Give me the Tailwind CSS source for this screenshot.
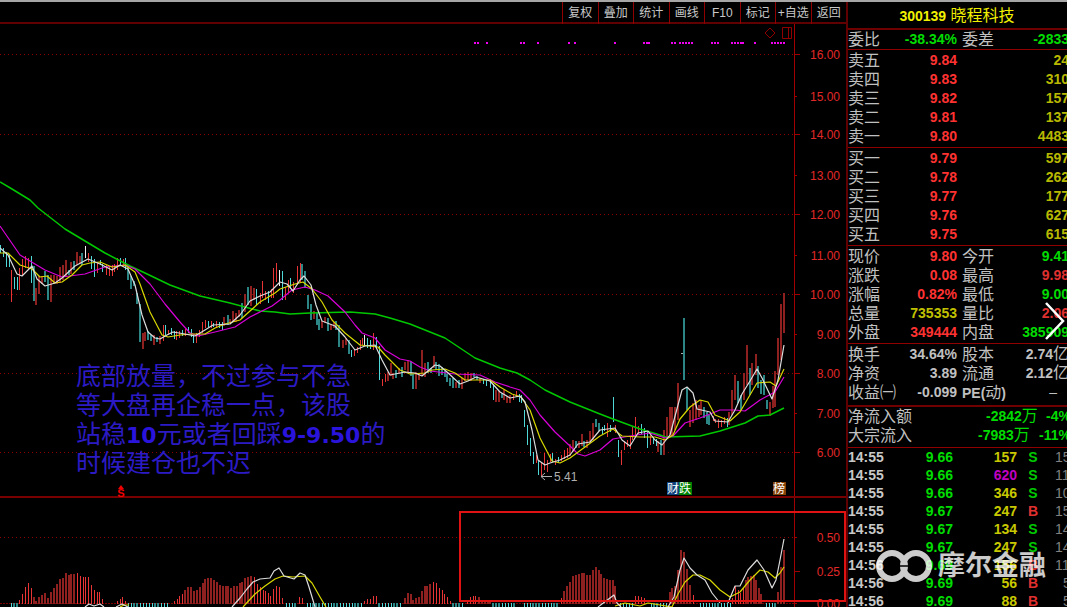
<!DOCTYPE html>
<html lang="zh-CN">
<head>
<meta charset="utf-8">
<title>300139 晓程科技</title>
<script src="https://cdn.jsdelivr.net/npm/@tailwindcss/browser@4"></script>
</head>
<body class="flex h-screen flex-col overflow-hidden bg-black font-['Liberation_Sans','Noto_Sans_CJK_SC',sans-serif] text-[#c0c0c0]">
<div class="h-[2px] shrink-0 bg-[#a6a6a6]"></div>
<div class="flex min-h-0 flex-1">
  <main class="relative flex min-w-0 flex-1 flex-col">
    <nav class="flex h-[22px] shrink-0 justify-end border-b-2 border-[#600000] text-[12px] text-[#c8c8c8]">
      <div class="grid w-[284px] grid-cols-8 leading-[22px]">
        <button class="border-l border-[#900000]">复权</button>
        <button class="border-l border-[#900000]">叠加</button>
        <button class="border-l border-[#900000]">统计</button>
        <button class="border-l border-[#900000]">画线</button>
        <button class="border-l border-[#900000]">F10</button>
        <button class="border-l border-[#900000]">标记</button>
        <button class="border-l border-[#900000] whitespace-nowrap">+自选</button>
        <button class="border-l border-[#900000]">返回</button>
      </div>
    </nav>
    <svg class="h-auto w-full" viewBox="0 24 846 583" role="img" aria-label="K线图">
      <g id="grid" stroke="#8c0000" stroke-dasharray="1 3" shape-rendering="crispEdges"></g>
      <g stroke="#a00000" shape-rendering="crispEdges">
        <path d="M794.5 24V607"/>
        <path id="ticks"/>
        <path d="M0 497H846" stroke="#780000" stroke-width="2"/>
        <path d="M0 603.5H794" stroke="#780000" stroke-dasharray="2 1"/>
      </g>
      <g id="labels" fill="#e02828" font-size="12" text-anchor="end"></g>
      <path id="marks" stroke="#f000f0" stroke-width="2" shape-rendering="crispEdges"/>
      <g fill="none" stroke="#900000"><path d="M770 28l5 5-5 5-5-5zM782.5 27.500h9v11h-9zM788.500 27.500v11"/></g>
      <g id="candles" shape-rendering="crispEdges"></g>
      <g id="hist" shape-rendering="crispEdges"></g>
      <g fill="none" stroke-linejoin="round" stroke-width="1.200">
        <polyline stroke="#00c800" stroke-width="1.500" points="0,182 12,189 30,200 38,208 65,229 90,244 105,253 130,266 145,273 170,285 200,296 230,303 260,311 275,312 290,314 310,313 350,312 375,314 390,318 410,324 430,332 445,338 475,358 500,368 517,373 530,380 545,390 570,402 600,414 613,419 640,429 660,435 665,437 700,436 720,431 745,423 758,416 770,415 784,408"/>
        <polyline stroke="#d800d8" points="0,226 20,255 30,261 45,270 62,277 85,274 105,267 125,265 135,269 150,284 165,304 180,322 190,333 198,336 215,332 235,327 250,317 262,311 272,306 280,300 292,290 305,287 315,290 328,296 345,312 355,325 362,333 375,338 385,350 400,359 410,361 420,367 430,371 455,374 480,375 495,382 510,387 520,390 530,400 540,415 555,432 570,446 578,454 585,456 600,450 613,439 630,436 650,433 665,438 673,436 685,423 700,418 720,410 735,410 745,411 760,400 775,392 784,377"/>
        <polyline stroke="#d8d800" points="0,253 8,253 20,265 32,269 40,277 47,276 55,283 62,282 72,275 82,265 90,263 100,262 112,267 125,265 135,272 140,284 150,312 162,335 168,337 180,335 192,334 205,334 215,328 225,324 240,320 250,311 260,302 275,293 280,289 295,284 303,282 312,289 322,302 332,320 345,333 360,345 378,347 385,355 400,370 410,374 425,373 432,370 445,369 455,373 465,380 490,380 500,387 512,394 521,397 530,410 540,438 552,461 560,463 570,458 585,447 600,436 613,429 622,436 640,437 655,437 665,440 673,435 680,419 690,407 700,400 708,402 715,415 730,421 740,412 757,383 770,382 776,386 784,369"/>
        <polyline stroke="#dcdcdc" points="0,248 8,255 17,274 22,276 32,266 37,279 45,286 55,283 62,278 75,266 88,259 100,264 112,270 120,265 128,269 135,285 142,315 148,332 155,338 160,339 167,335 173,332 185,334 195,336 205,330 213,325 230,324 240,315 250,301 260,296 270,292 275,287 280,282 287,284 293,291 300,280 304,276 311,285 316,305 322,321 335,326 345,337 355,350 365,346 375,345 382,360 390,375 405,372 415,373 422,376 435,365 440,366 447,372 460,384 468,381 476,377 490,381 500,392 510,398 520,396 525,402 532,430 538,460 545,465 550,463 560,460 570,455 578,444 590,442 600,430 615,428 622,440 630,446 638,433 648,431 655,440 662,445 670,435 678,405 682,390 687,387 693,393 697,409 710,412 715,421 728,422 735,410 742,394 750,381 757,369 762,378 772,399 778,380 784,345"/>
        <path stroke="#d8d800" d="M120 607L124 605H129M243 607L255 594 265 586 275 579 283 576 293 577 305 576 312 583 320 597 326 607M615 606L625 603 640 606 648 603 660 605 672 607 678 594 685 582 693 575 700 575 710 580 720 590 730 597 740 592 750 580 760 570 768 572 775 578 780 573 784 567"/>
        <path stroke="#dcdcdc" d="M85 607L89 604 94 606 100 604 104 607M116 607L122 604 128 607M232 607L240 598 247 589 253 582 260 579 270 578 274 571 279 568 284 576 294 579 300 573 305 575 309 587 315 607M598 607L610 598 614 595 617 603 621 607M668 607L674 597 680 570 684 558 690 568 697 575 705 580 712 593 720 603M728 603L735 586 740 586 748 570 757 560 764 570 772 588 776 580 780 560 784 539"/>
      </g>
      <path d="M681 353.500h2" stroke="#aaa"/>
      <path d="M552 476.500H541M545 473l-4 3.500 4 3.500" fill="none" stroke="#b0b0b0"/>
      <text x="554" y="481" font-size="12" fill="#b0b0b0">5.41</text>
      <path d="M118 489l3-4 3 4z" fill="#f00000"/>
      <text x="121" y="497" font-size="11" font-weight="bold" fill="#f00000" text-anchor="middle">S</text>
      <g font-size="12" fill="#fff" text-anchor="middle">
        <rect x="667" y="482" width="12" height="13" fill="#10407c"/><text x="673" y="493">财</text>
        <rect x="679" y="482" width="13" height="13" fill="#008000"/><text x="685" y="493">跌</text>
        <rect x="773" y="482" width="13" height="13" fill="#854208"/><text x="779" y="493">榜</text>
      </g>
      <rect x="460" y="512" width="385" height="89" fill="none" stroke="#e01212" stroke-width="2"/>
    </svg>
    <p class="absolute top-[358px] left-[76px] font-['Noto_Sans_CJK_SC',sans-serif] text-[25px] leading-[29px] whitespace-nowrap text-[#2c1bc4]">底部放量，不过参与不急<br>等大盘再企稳一点，该股<br>站稳<b class="font-['DejaVu_Sans'] text-[22px] leading-none text-[#2a14dc]">10</b>元或者回踩<b class="font-['DejaVu_Sans'] text-[22px] leading-none text-[#2a14dc]">9-9.50</b>的<br>时候建仓也不迟</p>
  </main>

  <aside class="relative w-[221px] shrink-0 overflow-hidden border-l-2 border-[#600000] text-[14px] leading-[19px] font-bold whitespace-nowrap">
    <h1 class="h-[26px] pr-[1px] text-center text-[16px] leading-[27px] font-normal text-[#f0f000]"><b class="text-[14px]">300139</b> 晓程科技</h1>
    <div class="w-[221px] border-t-2 border-[#700000]">
      <table class="w-full table-fixed">
        <colgroup><col class="w-[52px]"><col class="w-[57px]"><col class="w-[48px]"><col></colgroup>
        <tbody class="[&_th]:text-left [&_th]:text-[16px] [&_th]:font-normal [&_td]:text-right">
          <tr><th>委比</th><td class="text-[#00dc00]">-38.34%</td><th class="pl-[5px]">委差</th><td class="text-[#00dc00]">-2833</td></tr>
        </tbody>
      </table>
    </div>
    <div class="w-[221px] border-t border-[#900000] py-[1px]">
      <table class="w-full table-fixed">
        <colgroup><col class="w-[52px]"><col class="w-[57px]"><col></colgroup>
        <tbody class="text-[#b8b800] [&_th]:text-left [&_th]:text-[16px] [&_th]:font-normal [&_th]:text-[#c0c0c0] [&_td]:text-right">
          <tr><th>卖五</th><td class="text-[#ff3232]">9.84</td><td>24</td></tr>
          <tr><th>卖四</th><td class="text-[#ff3232]">9.83</td><td>310</td></tr>
          <tr><th>卖三</th><td class="text-[#ff3232]">9.82</td><td>157</td></tr>
          <tr><th>卖二</th><td class="text-[#ff3232]">9.81</td><td>137</td></tr>
          <tr><th>卖一</th><td class="text-[#ff3232]">9.80</td><td>4483</td></tr>
        </tbody>
      </table>
    </div>
    <div class="w-[221px] border-t border-[#900000] py-[1px]">
      <table class="w-full table-fixed">
        <colgroup><col class="w-[52px]"><col class="w-[57px]"><col></colgroup>
        <tbody class="text-[#b8b800] [&_th]:text-left [&_th]:text-[16px] [&_th]:font-normal [&_th]:text-[#c0c0c0] [&_td]:text-right">
          <tr><th>买一</th><td class="text-[#ff3232]">9.79</td><td>597</td></tr>
          <tr><th>买二</th><td class="text-[#ff3232]">9.78</td><td>262</td></tr>
          <tr><th>买三</th><td class="text-[#ff3232]">9.77</td><td>177</td></tr>
          <tr><th>买四</th><td class="text-[#ff3232]">9.76</td><td>627</td></tr>
          <tr><th>买五</th><td class="text-[#ff3232]">9.75</td><td>615</td></tr>
        </tbody>
      </table>
    </div>
    <div class="w-[221px] border-t border-[#900000] py-[1px]">
      <table class="w-full table-fixed">
        <colgroup><col class="w-[52px]"><col class="w-[57px]"><col class="w-[48px]"><col></colgroup>
        <tbody class="[&_th]:text-left [&_th]:text-[16px] [&_th]:font-normal [&_td]:text-right">
          <tr><th>现价</th><td class="text-[#ff3232]">9.80</td><th class="pl-[5px]">今开</th><td class="text-[#00dc00]">9.41</td></tr>
          <tr><th>涨跌</th><td class="text-[#ff3232]">0.08</td><th class="pl-[5px]">最高</th><td class="text-[#e03030]">9.98</td></tr>
          <tr><th>涨幅</th><td class="text-[#ff3232]">0.82%</td><th class="pl-[5px]">最低</th><td class="text-[#00dc00]">9.00</td></tr>
          <tr><th>总量</th><td class="text-[#c0c000]">735353</td><th class="pl-[5px]">量比</th><td class="text-[#e03030]">2.06</td></tr>
          <tr><th>外盘</th><td class="text-[#ff3232]">349444</td><th class="pl-[5px]">内盘</th><td class="text-[#00dc00]">385909</td></tr>
        </tbody>
      </table>
    </div>
    <div class="w-[221px] border-t border-[#900000] pt-[1px] pb-[3px]">
      <table class="w-full table-fixed">
        <colgroup><col class="w-[52px]"><col class="w-[57px]"><col class="w-[48px]"><col></colgroup>
        <tbody class="[&_th]:text-left [&_th]:text-[16px] [&_th]:font-normal [&_td]:text-right">
          <tr><th>换手</th><td>34.64%</td><th class="pl-[5px]">股本</th><td>2.74<span class="text-[16px] leading-none font-normal">亿</span></td></tr>
          <tr><th>净资</th><td>3.89</td><th class="pl-[5px]">流通</th><td>2.12<span class="text-[16px] leading-none font-normal">亿</span></td></tr>
          <tr><th>收益㈠</th><td>-0.099</td><th class="pl-[5px]"><b class="text-[14px] leading-none">PE(</b>动<b class="text-[14px] leading-none">)</b></th><td class="pr-[12px] font-normal">–</td></tr>
        </tbody>
      </table>
    </div>
    <div class="w-[223px] border-t-2 border-[#700000] pb-[2px]">
      <table class="w-full table-fixed text-[#00dc00]">
        <colgroup><col class="w-[70px]"><col><col class="w-[36px]"></colgroup>
        <tbody class="[&_th]:text-left [&_th]:text-[16px] [&_th]:font-normal [&_th]:text-[#c0c0c0]">
          <tr><th>净流入额</th><td class="pl-[68px]">-2842<span class="text-[16px] leading-none font-normal">万</span></td><td class="text-right">-4%</td></tr>
          <tr><th>大宗流入</th><td class="pl-[60px]">-7983<span class="text-[16px] leading-none font-normal">万</span></td><td class="text-right">-11%</td></tr>
        </tbody>
      </table>
    </div>
    <div class="w-[221px] border-t border-[#900000]">
      <table class="w-full table-fixed leading-[18px] text-[#c8c8c8]">
        <colgroup><col class="w-[48px]"><col class="w-[57px]"><col class="w-[64px]"><col class="w-[32px]"><col></colgroup>
        <tbody class="[&_td]:text-right [&_td:nth-child(1)]:text-left [&_td:nth-child(2)]:text-[#00dc00] [&_td:nth-child(4)]:text-center [&_td:nth-child(5)]:pl-[6px] [&_td:nth-child(5)]:text-left [&_td:nth-child(5)]:font-normal [&_td:nth-child(5)]:text-[#808080]">
          <tr><td>14:55</td><td>9.66</td><td class="text-[#c8c800]">157</td><td class="text-[#00c800]">S</td><td>15</td></tr>
          <tr><td>14:55</td><td>9.66</td><td class="text-[#c000c0]">620</td><td class="text-[#00c800]">S</td><td>11</td></tr>
          <tr><td>14:55</td><td>9.66</td><td class="text-[#c8c800]">346</td><td class="text-[#00c800]">S</td><td>10</td></tr>
          <tr><td>14:55</td><td>9.67</td><td class="text-[#c8c800]">247</td><td class="text-[#e03030]">B</td><td>15</td></tr>
          <tr><td>14:55</td><td>9.67</td><td class="text-[#c8c800]">134</td><td class="text-[#00c800]">S</td><td>14</td></tr>
          <tr><td>14:55</td><td>9.67</td><td class="text-[#c8c800]">247</td><td class="text-[#00c800]">S</td><td>14</td></tr>
          <tr><td>14:56</td><td>9.69</td><td class="text-[#c8c800]">156</td><td class="text-[#e03030]">B</td><td>11</td></tr>
          <tr><td>14:56</td><td>9.69</td><td class="text-[#c8c800]">56</td><td class="text-[#e03030]">B</td><td class="indent-[8px]">5</td></tr>
          <tr><td>14:56</td><td>9.69</td><td class="text-[#c8c800]">88</td><td class="text-[#e03030]">B</td><td class="indent-[8px]">5</td></tr>
        </tbody>
      </table>
    </div>
    <button class="absolute top-[299px] right-[2px]" aria-label="下一张">
      <svg class="h-[40px] w-[20px]" viewBox="0 0 20 40" fill="none" stroke="#fff" stroke-width="2.500"><path d="M1 2L18 20 1 38"/></svg>
    </button>
    <div class="absolute top-[546px] left-[28px] flex items-center gap-[6px] text-[27px] leading-[36px] font-bold text-white/80">
      <svg class="h-[34px] w-[56px] opacity-80" viewBox="0 0 56 34" fill="none" stroke="#fff" stroke-width="6"><circle cx="16" cy="17" r="13"/><circle cx="40" cy="17" r="13"/><path d="M25 10h6v14h-6z" fill="#fff" stroke="none"/><path d="M23 17h10" stroke="#000" stroke-width="1.500"/></svg>
      <span>摩尔金融</span>
    </div>
  </aside>
</div>
<script>
const NS = 'http://www.w3.org/2000/svg';
const THIN = {r: '#e83434', c: '#50d8d8', w: '#f0f0f0'};
const WIDE = {r: '#8e2020', c: '#2c8686', w: '#a0a0a0'};
const byId = id => document.getElementById(id);
function add(parent, name, attrs, text) {
  const el = document.createElementNS(NS, name);
  for (const k in attrs) el.setAttribute(k, attrs[k]);
  if (text) el.textContent = text;
  byId(parent).appendChild(el);
}
const within = (runs, x) => runs.some(([a, b]) => x >= a && x <= b);
function bar(parent, c, x, y1, y2, wide) {
  add(parent, 'path', {d: `M${wide ? +x : x + '.5'} ${y1}V${y2}`, stroke: (wide ? WIDE : THIN)[c], 'stroke-width': wide ? 2 : 1});
}

// price and indicator axes
[54, 134, 214, 294, 373, 452, 537].forEach(y => add('grid', 'path', {d: `M0 ${y}.5H794`}));
const axis = [['16.00',54],['15.00',96],['14.00',134],['13.00',175],['12.00',214],['11.00',255],['10.00',294],['9.00',334],['8.00',373],['7.00',413],['6.00',452],['0.50',537],['0.25',571],['0.00',603]];
byId('ticks').setAttribute('d', axis.map(([, y], i) => `M795 ${y}.5h${i % 2 ? 2 : 5}`).join(''));
axis.forEach(([t, y]) => add('labels', 'text', {x: 840, y: y + 5}, t));

byId('marks').setAttribute('d', [475,478,487,521,524,538,569,575,615,644,647,649,672,675,680,683,686,689,692,712,715,718,732,735,738,741,743,755,772,775,778,781,784].map(x => `M${x - 1} 43h2`).join(''));

// candles: colour, x, high, low
const candles = `c0 245 253 c3 248 257 c6 252 267 c9 254 267 r11 270 302 c14 277 289 c17 277 290 r19 268 290 r22 259 275 r25 256 268 r28 258 270 c31 256 283 c34 266 301 r36 288 305 r39 276 294 r42 276 284 c45 271 282 c48 275 300 r51 275 302 r54 275 284 r57 276 284 r60 267 283 r63 265 280 r66 260 277 c69 270 275 r71 262 274 c74 261 270 r77 252 265 r80 256 264 c82 253 265 w85 246 258 r88 253 262 c91 256 269 c94 259 277 r97 262 273 c100 260 265 c102 264 272 r106 265 275 r109 266 276 r112 265 276 r114 264 272 r117 258 270 c120 258 265 r123 259 266 c125 258 270 c128 265 280 c131 276 289 c134 281 286 c137 293 304 c140 304 342 r143 333 349 r145 332 341 c148 331 340 c151 335 341 r154 335 345 c157 337 342 r160 336 344 r163 325 341 c165 325 335 r168 330 334 c171 328 335 c174 331 339 r176 331 340 r179 331 338 c182 330 336 r185 329 336 c188 327 333 c191 329 337 c193 334 343 r196 333 343 r199 330 337 r202 322 333 r205 320 328 c208 321 327 r211 321 328 c213 323 327 r216 321 328 c219 322 328 c222 322 330 r224 317 326 c228 315 325 r230 319 324 r233 311 322 r236 313 322 r239 310 317 c242 303 318 r245 294 312 c248 287 305 r251 286 306 r254 288 300 c256 289 305 r260 293 304 r262 281 298 r265 291 300 c268 291 303 r271 289 298 r273 268 298 r276 263 282 w279 270 286 c282 271 300 r285 287 300 r288 280 293 c290 278 288 r293 282 293 r297 266 285 r300 263 282 c302 264 280 c305 271 288 c308 295 309 c311 304 320 r314 311 319 c317 312 325 c319 319 330 r322 321 328 r325 317 323 c328 318 331 r331 325 330 r334 322 328 c336 321 330 c339 325 347 r343 340 348 r346 338 345 c349 340 354 c351 350 357 r354 349 356 r357 347 353 r360 340 350 r362 338 345 w364 335 346 c367 338 348 c370 340 349 r373 333 350 c376 337 348 c379 346 380 r382 379 386 r385 374 382 r388 372 381 r391 363 376 r393 373 379 c396 370 378 r399 368 374 c402 367 377 r405 362 370 r408 360 373 c411 361 376 c413 374 389 r416 372 389 r419 373 380 r422 350 375 r425 363 377 c428 362 373 c431 368 373 r434 356 368 c436 362 370 c439 364 376 c442 367 375 c445 371 377 c447 374 382 c450 378 386 c453 378 388 r456 382 388 c459 380 388 r462 378 389 r465 373 381 r468 372 380 r471 373 381 c474 373 377 c477 376 380 r480 378 383 c483 379 384 c486 380 386 c490 379 388 c493 384 400 r496 390 402 r499 391 402 c502 393 398 r504 390 400 r507 396 403 r510 395 403 r513 394 400 r516 391 397 c519 394 402 c521 395 403 c524 410 427 c527 425 445 c530 438 456 c533 452 464 r536 455 463 c538 461 475 r541 463 477 r544 453 470 r547 460 472 r550 454 462 c552 453 462 r555 459 465 c558 457 463 r561 455 461 r564 450 459 r567 448 458 r570 444 456 r573 440 452 c576 441 448 r579 441 448 r582 434 446 c584 441 447 r587 440 448 r590 431 443 r593 423 440 c596 419 427 c599 423 431 c602 427 434 c604 425 431 r607 423 437 c610 425 432 c613 397 422 r615 425 433 c618 440 457 r621 450 465 r624 441 450 r627 440 447 r630 437 449 r632 427 440 r635 417 437 r638 426 434 c641 424 434 c644 428 438 c647 432 448 r650 435 445 c653 437 444 c656 439 446 r658 441 452 c661 440 455 r664 430 455 r667 417 437 r670 407 437 r672 407 436 r675 407 430 r678 383 420 c684 318 380 c687 388 410 r690 410 427 r693 403 423 r696 400 420 r699 405 417 r701 400 415 c704 407 418 c707 412 424 c709 415 425 r713 416 421 r715 419 423 r718 419 428 r721 420 427 r724 417 424 c727 418 427 r729 412 425 r732 390 415 r735 375 400 c738 381 403 c741 395 410 r744 373 400 r747 345 385 c750 368 395 r752 363 385 r756 354 375 c758 366 388 c761 380 394 c764 375 395 c767 400 409 r770 402 416 r773 386 408 r775 371 407 r778 338 375 r781 304 360 r784 293 333`;
const wideCandles = [[34, 84], [128, 162], [224, 254], [302, 350], [388, 480], [495, 512], [570, 600], [658, 712], [729, 790]];
for (const [, c, x, hi, lo] of candles.matchAll(/([rcw])(\d+) (\d+) (\d+)/g))
  bar('candles', c, x, hi, lo, within(wideCandles, +x));

// histogram above zero: x, top
const up = `19 600 22 594 25 587 28 583 31 588 34 597 36 601 39 597 42 595 45 593 48 598 51 592 54 588 57 584 60 579 63 578 66 573 69 575 71 574 74 574 77 573 80 576 83 577 85 577 88 577 91 585 94 590 97 592 99 592 102 599 117 601 120 599 122 597 125 601 174 601 177 599 179 596 182 594 185 590 188 587 191 587 194 591 197 590 200 587 203 583 205 579 208 578 211 578 214 580 217 582 220 585 223 586 226 586 228 586 231 588 234 586 237 586 240 583 242 582 245 578 248 577 251 576 254 577 257 584 260 587 263 590 265 591 268 593 270 596 273 589 276 586 279 587 282 598 299 597 302 598 364 601 367 599 370 599 373 596 376 596 405 598 408 593 411 594 413 600 416 598 419 597 422 591 425 586 427 586 430 584 433 582 436 583 439 588 442 590 444 594 447 597 450 601 467 600 470 597 473 596 475 596 479 597 482 600 485 600 488 600 490 601 561 598 564 591 567 586 570 582 573 576 576 575 579 574 582 573 584 573 587 575 590 575 593 570 596 567 599 570 601 574 604 578 607 579 610 580 613 580 615 586 635 596 638 596 641 597 644 598 670 592 672 588 675 586 678 570 681 550 684 552 687 569 690 585 693 595 732 598 735 586 738 590 740 593 743 588 746 580 748 577 751 576 754 575 756 580 759 588 761 594 778 592 781 567 784 550`;
const wideBars = [[34, 74], [185, 251], [405, 430], [479, 492], [564, 616], [670, 690], [745, 790]];
for (const [, x, y] of up.matchAll(/(\d+) (\d+)/g))
  bar('hist', 'r', x, y, 604, within(wideBars, +x));

// histogram below zero: runs of x
[[11,18],[128,169],[286,295],[307,363],[379,400],[453,462],[493,514],[524,559],[620,633],[651,667],[700,730],[766,776]].forEach(([a, b]) => {
  for (let x = a; x <= b; x += 3) bar('hist', 'c', x, 603, 607, x % 20 > 12);
});
</script>
</body>
</html>
